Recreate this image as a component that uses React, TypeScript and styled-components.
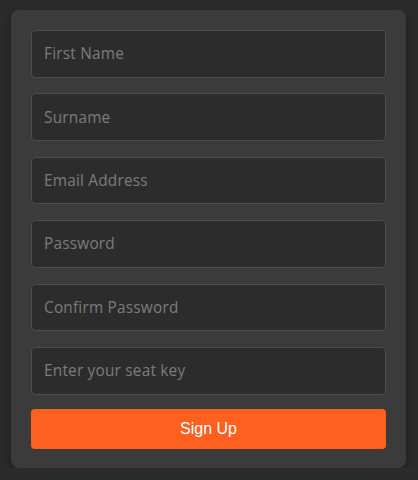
import React from "react";
import styled, { createGlobalStyle } from "styled-components";

const Global = createGlobalStyle`
  html, body {
    margin: 0;
    padding: 0;
    background: #2b2b2b;
  }
  * { box-sizing: border-box; }
`;

const Page = styled.div`
  padding: 10px 12px 0 11px;
`;

const Card = styled.form`
  width: 395px;
  background: #3b3b3b;
  border-radius: 8px;
  padding: 20px 20px 19px 20px;
  display: flex;
  flex-direction: column;
  gap: 14.4px;
  box-shadow: 0 4px 10px rgba(0, 0, 0, 0.35);
`;

const Fields = styled.div`
  display: flex;
  flex-direction: column;
  gap: 15.8px;
`;

const Field = styled.input`
  height: 47.6px;
  width: 100%;
  background: #2c2c2c;
  border: 1px solid #4d4d4d;
  border-radius: 4px;
  padding: 0 12px;
  font-family: "Open Sans", "Noto Sans", sans-serif;
  font-size: 15.4px;
  color: #ddd;
  outline: none;
  &::placeholder {
    color: #7c7c7c;
    letter-spacing: 0.2px;
  }
`;

const Submit = styled.button`
  height: 40px;
  width: 100%;
  background: #ff5f1f;
  border: none;
  border-radius: 4px;
  color: #ffffff;
  font-family: "Liberation Sans", Arial, sans-serif;
  font-size: 16px;
  cursor: pointer;
`;

const fields = [
  { placeholder: "First Name", type: "text" },
  { placeholder: "Surname", type: "text" },
  { placeholder: "Email Address", type: "email" },
  { placeholder: "Password", type: "password" },
  { placeholder: "Confirm Password", type: "password" },
  { placeholder: "Enter your seat key", type: "text" },
];

export default function App() {
  return (
    <Page>
      <Global />
      <Card onSubmit={(e) => e.preventDefault()}>
        <Fields>
          {fields.map((f) => (
            <Field key={f.placeholder} type={f.type} placeholder={f.placeholder} />
          ))}
        </Fields>
        <Submit type="submit">Sign Up</Submit>
      </Card>
    </Page>
  );
}
